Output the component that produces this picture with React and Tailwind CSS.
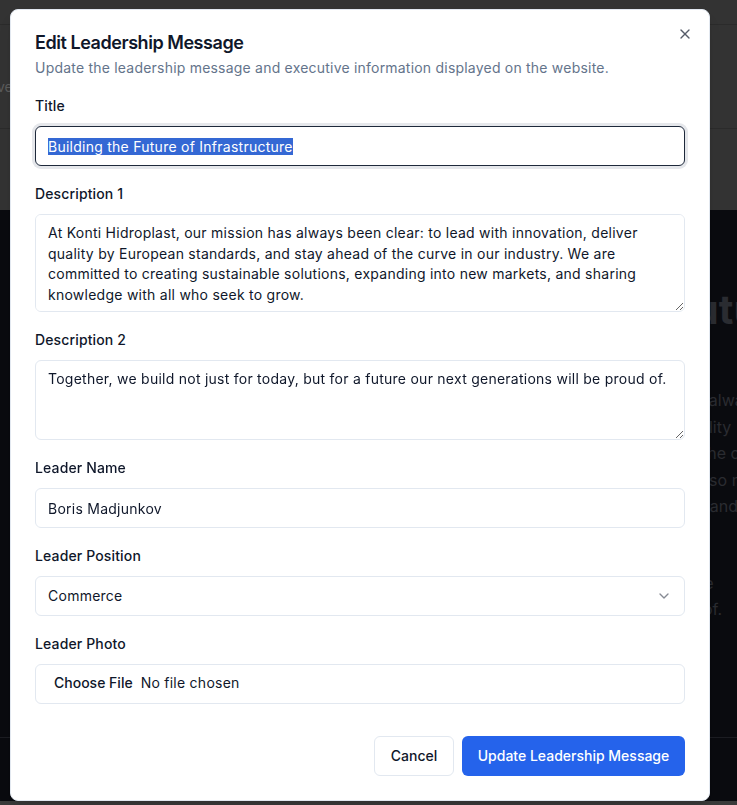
import React, { useEffect, useRef } from 'react';
import { X, ChevronDown } from 'lucide-react';

const Field = ({ label, children }) => (
  <div className="flex flex-col gap-2.5">
    <label className="h-5 text-sm font-medium leading-5 tracking-[0.01em] text-[#0f172a]">{label}</label>
    {children}
  </div>
);

const inputCls =
  'h-10 w-full rounded-md border border-[#e2e8f0] bg-white px-3 text-sm tracking-[0.018em] text-[#0f172a] outline-none';

const App = () => {
  const titleRef = useRef(null);

  useEffect(() => {
    const el = titleRef.current;
    if (el) {
      el.focus();
      el.setSelectionRange(0, el.value.length);
    }
  }, []);

  return (
    <div className="relative flex h-screen flex-col overflow-hidden font-['Inter',sans-serif]">
      {/* page behind the overlay (already dimmed) */}
      <div className="h-[25px] border-b border-[#2b2b2b] bg-[#333333]" />
      <div className="flex h-[104px] items-center border-b border-[#2b2b2b] bg-[#333333] text-sm text-[#5c5c5c]">
        <span className="-ml-[3px] mt-[20px]">ve</span>
      </div>
      <div className="h-[81px] bg-[#333333]" />
      <div className="flex flex-1 flex-col bg-[#0a0b0f]">
        <div className="grid flex-1 grid-cols-[430px_1fr] pt-[76px]">
          <div />
          <div className="flex flex-col whitespace-nowrap text-[#2a2c31]">
            <h2 className="text-[40px] font-bold leading-[48px]">Building the Future</h2>
            <div className="mt-[53px] flex flex-col text-base leading-[26.5px]">
              <span className="pl-[6px]">At Konti Hidroplast, our mission has always been</span>
              <span className="pl-[20px]">with innovation, and to deliver quality</span>
              <span className="pl-[40px]">European standards, ahead of the curve</span>
              <span className="pl-[18px]">sustainable solutions, and sharing so much</span>
              <span className="pl-[58px]">expanding into new markets, and more</span>
            </div>
            <div className="mt-[50px] flex flex-col text-base leading-[26.5px]">
              <span className="pl-[34px]">not just for today, but for a future</span>
              <span className="pl-[40px]">next generations will be proud of.</span>
            </div>
          </div>
        </div>
        <div className="h-[64px] border-t border-[#1c1d22]" />
        <div className="h-[4px] bg-[#3a3a3a]" />
      </div>

      {/* dialog */}
      <div className="absolute left-[10px] top-[9px] w-[700px] rounded-lg border border-[#e2e8f0] bg-white p-6 shadow-lg">
        <button className="absolute right-4 top-4 text-[#0f172a] opacity-70">
          <X className="h-4 w-4" strokeWidth={2} />
        </button>

        <div className="flex flex-col gap-1.5">
          <h2 className="text-lg font-semibold leading-none tracking-tight text-[#0f172a]">
            Edit Leadership Message
          </h2>
          <p className="text-sm leading-5 tracking-[0.015em] text-[#64748b]">
            Update the leadership message and executive information displayed on the website.
          </p>
        </div>

        <form className="mt-[18px] flex flex-col gap-[18px]">
          <Field label="Title">
            <input
              ref={titleRef}
              defaultValue="Building the Future of Infrastructure"
              className="h-10 w-full rounded-md border border-[#1e293b] bg-white px-3 text-sm tracking-[0.018em] text-[#0f172a] outline-none ring-[3px] ring-[#e5e7eb] selection:bg-[#3468d4] selection:text-white"
            />
          </Field>

          <Field label="Description 1">
            <textarea
              className="h-[98px] w-full rounded-md border border-[#e2e8f0] bg-white px-3 py-2 text-sm leading-[20.5px] tracking-[0.018em] text-[#0f172a] outline-none"
              defaultValue="At Konti Hidroplast, our mission has always been clear: to lead with innovation, deliver quality by European standards, and stay ahead of the curve in our industry. We are committed to creating sustainable solutions, expanding into new markets, and sharing knowledge with all who seek to grow."
            />
          </Field>

          <Field label="Description 2">
            <textarea
              className="h-20 w-full rounded-md border border-[#e2e8f0] bg-white px-3 py-2 text-sm leading-[20.5px] tracking-[0.018em] text-[#0f172a] outline-none"
              defaultValue="Together, we build not just for today, but for a future our next generations will be proud of."
            />
          </Field>

          <Field label="Leader Name">
            <input defaultValue="Boris Madjunkov" className={inputCls} />
          </Field>

          <Field label="Leader Position">
            <button
              type="button"
              className="flex h-10 w-full items-center justify-between rounded-md border border-[#e2e8f0] bg-white px-3 text-sm tracking-[0.018em] text-[#0f172a]"
            >
              <span>Commerce</span>
              <ChevronDown className="h-4 w-4 opacity-50" />
            </button>
          </Field>

          <Field label="Leader Photo">
            <input
              type="file"
              className="h-10 w-full rounded-md border border-[#e2e8f0] bg-white px-3 py-2 text-sm tracking-[0.018em] text-[#0f172a] file:mr-0.5 file:border-0 file:bg-transparent file:px-1.5 file:text-sm file:font-medium file:tracking-normal file:text-[#0f172a]"
            />
          </Field>
        </form>

        <div className="mt-8 flex justify-end gap-2">
          <button className="h-10 w-20 rounded-md border border-[#e2e8f0] bg-white text-sm font-medium text-[#0f172a]">
            Cancel
          </button>
          <button className="h-10 w-[223px] rounded-md bg-[#2563eb] text-sm font-medium text-white">
            Update Leadership Message
          </button>
        </div>
      </div>
    </div>
  );
};

export default App;
